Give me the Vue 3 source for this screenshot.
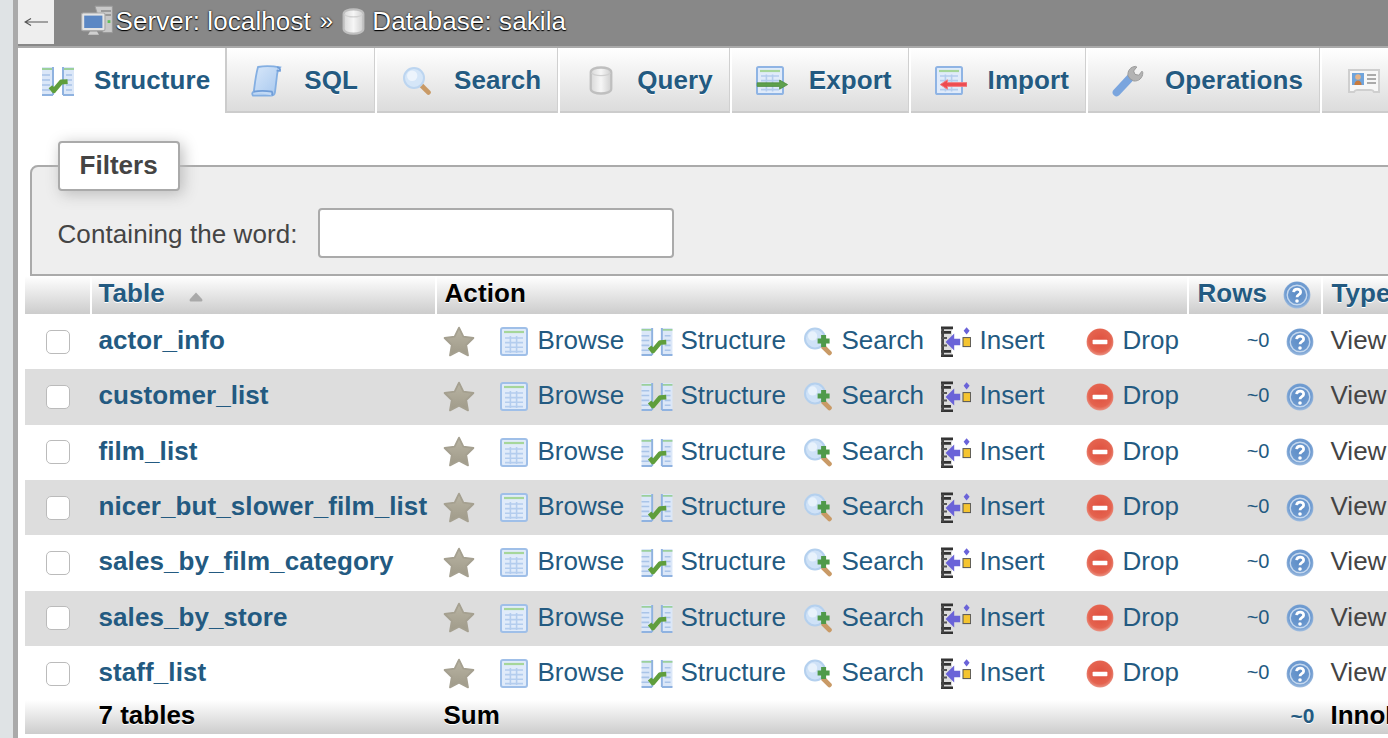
<script setup>
const tabs = [
  { label: 'Structure', icon: 'props', active: true },
  { label: 'SQL', icon: 'sql' },
  { label: 'Search', icon: 'lens' },
  { label: 'Query', icon: 'db' },
  { label: 'Export', icon: 'export' },
  { label: 'Import', icon: 'import' },
  { label: 'Operations', icon: 'wrench' },
  { label: '', icon: 'card' },
]
const names = ['actor_info', 'customer_list', 'film_list', 'nicer_but_slower_film_list', 'sales_by_film_category', 'sales_by_store', 'staff_list']
const actions = [
  { label: 'Browse', icon: 'browse' },
  { label: 'Structure', icon: 'props' },
  { label: 'Search', icon: 'lensplus' },
  { label: 'Insert', icon: 'insert' },
  { label: 'Drop', icon: 'drop' },
]
</script>

<template>
  <svg class="defs" width="0" height="0" aria-hidden="true">
    <defs>
      <linearGradient id="g-star" x1="0" y1="0" x2="0" y2="1"><stop offset="0" stop-color="#b9b4a3"/><stop offset="1" stop-color="#9f9a89"/></linearGradient>
      <linearGradient id="g-cyl" x1="0" y1="0" x2="1" y2="0"><stop offset="0" stop-color="#d8d8d8"/><stop offset=".5" stop-color="#f6f6f6"/><stop offset="1" stop-color="#cfcfcf"/></linearGradient>
      <radialGradient id="g-help" cx=".5" cy=".45" r=".6"><stop offset="0" stop-color="#5c8cc6"/><stop offset=".7" stop-color="#6f9bd0"/><stop offset="1" stop-color="#b4cbe6"/></radialGradient>
      <radialGradient id="g-drop" cx=".5" cy=".45" r=".6"><stop offset="0" stop-color="#e0503f"/><stop offset=".7" stop-color="#e4634f"/><stop offset="1" stop-color="#eda598"/></radialGradient>
      <linearGradient id="g-paper" x1="0" y1="0" x2="1" y2="1"><stop offset="0" stop-color="#d9e8fa"/><stop offset="1" stop-color="#a6c7ee"/></linearGradient>

      <symbol id="i-props" viewBox="0 0 16 15">
        <path d="M0 .5h5.500v14H0z" fill="#dbe7f8"/><path d="M10.500 .5H16v14h-5.500z" fill="#dbe7f8"/>
        <path d="M0 1.500h5.500M10.500 1.500H16" stroke="#9bd09b" stroke-width="1"/>
        <path d="M0 4.500h4M0 7h4M0 9.500h4M12 4.500h3M12 7h3M12 9.500h3M0 12h4M12 12h3" stroke="#a9c4e8" stroke-width=".8"/>
        <path d="M5.500 .5v14M0 14.500h5.500M10.500 .5v14M10.500 14.500H16" stroke="#8fb2e0" stroke-width="1" fill="none"/>
        <path d="M4.200 10.400l1.700 2 3.700-4.400 3.200-.2" stroke="#5f9e3c" stroke-width="2.400" fill="none" stroke-linejoin="round"/>
      </symbol>

      <symbol id="i-browse" viewBox="0 0 14 14.500">
        <rect x=".5" y=".5" width="13" height="13.500" rx="1" fill="#e0ebfa" stroke="#9fbfe8"/>
        <path d="M2 2.500h10" stroke="#a6d69a" stroke-width="1.100"/>
        <path d="M2.500 5.500h9M2.500 7.800h9M2.500 10.100h9M2.500 12.300h9M5.200 4.500v8.500M8.300 4.500v8.500" stroke="#b4cdee" stroke-width=".8"/>
      </symbol>

      <symbol id="i-sql" viewBox="0 0 16 16">
        <path d="M3.500 1c3-.6 7-.6 11 .2-1 1-1.300 2-1.500 4l-1 8.300c-.2 1.200-1 1.800-2 1.800H1c-.6-.8-.5-1.500 .4-2 .5-4 1-8.500 2.100-12.300z" fill="url(#g-paper)" stroke="#84afe2" stroke-width=".9"/>
        <path d="M13 1.200c1 0 1.800 .7 1.500 1.700-.7 0-1.300 0-1.700-.2M1.400 13.300c2.500-.5 6-.5 9 0 .4 .6 .3 1.300 .1 2" fill="#c3daf5" stroke="#6f9dd8" stroke-width=".9"/>
      </symbol>

      <symbol id="i-lens" viewBox="0 0 14 14">
        <path d="M9 9l3.700 3.700" stroke="#c99a66" stroke-width="2.400" stroke-linecap="round"/>
        <circle cx="5.500" cy="5.500" r="5" fill="#d5e6f8" stroke="#bcd5f0" stroke-width="1"/>
        <circle cx="4.600" cy="4.400" r="2.600" fill="#edf4fc"/>
      </symbol>

      <symbol id="i-lensplus" viewBox="0 0 14 14">
        <path d="M9 9l3.700 3.700" stroke="#c99a66" stroke-width="2.400" stroke-linecap="round"/>
        <circle cx="5.500" cy="5.500" r="5" fill="#cfe2f7" stroke="#b4d0ee" stroke-width="1"/>
        <circle cx="4.300" cy="4.200" r="2.300" fill="#e8f2fc"/>
        <path d="M9.800 3.800v6M6.800 6.800h6" stroke="#4f9a4a" stroke-width="2.500"/>
      </symbol>

      <symbol id="i-db" viewBox="0 0 14 16" preserveAspectRatio="none">
        <path d="M1 3.500c0-3.600 12-3.600 12 0v9c0 3.600-12 3.600-12 0z" fill="url(#g-cyl)" stroke="#bfbfbf" stroke-width="1.300"/>
        <path d="M1.500 3.800c1.500 2 9.500 2 11 0" fill="none" stroke="#d0d0d0" stroke-width=".8"/>
      </symbol>

      <symbol id="i-export" viewBox="0 0 16 15">
        <rect x=".5" y=".5" width="13" height="13.500" rx=".8" fill="#e0ebfa" stroke="#8fb4e4"/>
        <path d="M2 2.500h10" stroke="#a6d69a" stroke-width="1.100"/>
        <path d="M2.500 5h9M2.500 7.300h9M2.500 11.800h9M5.200 4.200v8.500M8.300 4.200v8.500" stroke="#b4cdee" stroke-width=".8"/>
        <path d="M.6 8.400h11.200V7l4 2.300-4 2.300v-1.400H.6z" fill="#5da04c" stroke="#4c8a3e" stroke-width=".4"/>
      </symbol>

      <symbol id="i-import" viewBox="0 0 16 15">
        <rect x=".5" y=".5" width="13" height="13.500" rx=".8" fill="#e0ebfa" stroke="#8fb4e4"/>
        <path d="M2 2.500h10" stroke="#a6d69a" stroke-width="1.100"/>
        <path d="M2.500 5h9M2.500 7.300h9M2.500 11.800h9M5.200 4.200v8.500M8.300 4.200v8.500" stroke="#b4cdee" stroke-width=".8"/>
        <path d="M16 8.300H6.200V6.900L2.600 9.300l3.600 2.300v-1.400H16z" fill="#ee4a50" stroke="#f08085" stroke-width=".5"/>
      </symbol>

      <symbol id="i-wrench" viewBox="0 0 16 16">
        <path d="M2.300 13.700L9 6.500" stroke="#7aa5de" stroke-width="3.900" stroke-linecap="round"/>
        <path d="M9 6.900l-1-1.600c-.3-2.500 1.300-4.500 3.800-4.600l.6.3-1.600 2 .7 1.700 1.900.4 1.600-2 .4.700c0 2.700-2 4.400-4.500 4.200z" fill="#b3b3b3" stroke="#999" stroke-width=".5"/>
      </symbol>

      <symbol id="i-card" viewBox="0 0 16 12">
        <path d="M.5 .5h15v11H13c-.5-1-1.200-1-1.500-1h-7c-.5 0-1 0-1.500 1H.5z" fill="#f7f7f7" stroke="#cfcfcf"/>
        <rect x="2" y="2" width="6" height="6" fill="#6fa4dc"/>
        <circle cx="5" cy="4" r="1.400" fill="#e6b488"/>
        <path d="M3.200 8c0-3 3.600-3 3.600 0z" fill="#c97a3c"/>
        <path d="M9.500 3h4.500M9.500 5h4.500M9.500 7h4.500" stroke="#aaa" stroke-width="1"/>
      </symbol>

      <symbol id="i-server" viewBox="0 0 16 16">
        <path d="M7 .6h8.700v13.200H11z" fill="#c8c8c8" stroke="#9a9a9a" stroke-width=".5"/>
        <path d="M10 3h5M10 5h5" stroke="#8a8a8a" stroke-width=".8"/>
        <rect x="13.300" y="7.600" width="1.400" height="1.400" fill="#5fc05a"/>
        <rect x=".3" y="4" width="11.700" height="8.800" rx=".8" fill="#e4e4e4" stroke="#aaa" stroke-width=".6"/>
        <rect x="1.600" y="5.300" width="9.100" height="6.200" fill="#5b87c4"/>
        <path d="M4.500 13.200h3.500l1 1.700H3.500z" fill="#cfcfcf"/>
      </symbol>

      <symbol id="i-star" viewBox="0 0 16 16">
        <path d="M8 .8l2.200 4.500 5 .7-3.600 3.500.9 5.200L8 12.300 3.500 14.700l.9-5.200L.8 6l5-.7z" fill="url(#g-star)" stroke="#a5a090" stroke-width=".9" stroke-linejoin="round"/>
      </symbol>

      <symbol id="i-insert" viewBox="0 0 15 15.500">
        <path d="M.5 .5h5v14.500h-5z" fill="#ddd"/>
        <path d="M0 .9h6M0 15h6M0 3.200h5M0 12.700h5" stroke="#333" stroke-width="1.400"/>
        <path d="M.8 1v14" stroke="#444" stroke-width="1.400"/>
        <path d="M0 6h3M0 9.800h3" stroke="#555" stroke-width="1"/>
        <path d="M2.300 8l4.300-4.200v2.600h3v3.200h-3v2.600z" fill="#6a63d8"/>
        <rect x="11" y="5.800" width="3.800" height="4.500" fill="#f4c430" stroke="#555" stroke-width=".5"/>
        <path d="M12.800 .6l1.500 1.800-1.500 1.800-1.500-1.800z" fill="#6a63d8"/>
      </symbol>

      <symbol id="i-drop" viewBox="0 0 14 14">
        <circle cx="7" cy="7" r="6.700" fill="url(#g-drop)"/>
        <rect x="3.300" y="5.900" width="7.400" height="2.200" rx=".4" fill="#fff"/>
      </symbol>

      <symbol id="i-help" viewBox="0 0 14 14">
        <circle cx="7" cy="7" r="6.700" fill="url(#g-help)"/>
        <circle cx="7" cy="7" r="4.900" fill="none" stroke="#c5d8ee" stroke-width=".7"/>
        <path d="M5.300 5.600c.2-2.100 3.600-2.100 3.500 0 0 1.300-1.800 1.200-1.800 2.500" fill="none" stroke="#fff" stroke-width="1.400"/>
        <circle cx="7" cy="10" r=".9" fill="#fff"/>
      </symbol>
    </defs>
  </svg>

  <div class="page">
    <aside class="strip"></aside>
    <main class="main">
      <header class="topbar">
        <button class="back" aria-label="Back">
          <svg class="arrow" viewBox="0 0 24 10"><path d="M24 5H1M7 1.500L1 5l6 3.500" fill="none" stroke="#555" stroke-width="1.200"/></svg>
        </button>
        <div class="crumbs">
          <svg class="ic crumb-server"><use href="#i-server"/></svg>
          <span>Server: localhost</span>
          <span class="sep">»</span>
          <svg class="ic crumb-db"><use href="#i-db"/></svg>
          <span>Database: sakila</span>
        </div>
      </header>

      <nav class="tabs">
        <a v-for="t in tabs" :key="t.icon" class="tab" :class="['tab-' + t.icon, { active: t.active }]">
          <svg class="ic tab-ic"><use :href="'#i-' + t.icon"/></svg>
          <span v-if="t.label">{{ t.label }}</span>
        </a>
      </nav>

      <fieldset class="filters">
        <legend>Filters</legend>
        <label class="filter-row">
          <span class="word-label">Containing the word:</span>
          <input type="text" class="word" />
        </label>
      </fieldset>

      <section class="tbl">
        <div class="row head">
          <div class="cell"></div>
          <div class="cell sep-l name-h"><span class="lift">Table</span><svg class="sort" viewBox="0 0 14 10"><path d="M7 .5L13 7c.8 1 .5 2.500-.8 2.500H1.800C.5 9.500 .2 8 1 7z" fill="#a9a9a9"/></svg></div>
          <div class="cell sep-l action-h"><span class="lift">Action</span></div>
          <div class="cell sep-l rows-h"><span class="lift">Rows</span><svg class="ic hlp"><use href="#i-help"/></svg></div>
          <div class="cell sep-l type-h"><span class="lift">Type</span></div>
        </div>

        <div v-for="n in names" :key="n" class="row body">
          <div class="cell chk"><input type="checkbox" class="box" /></div>
          <div class="cell name"><span class="up">{{ n }}</span></div>
          <div class="cell acts">
            <svg class="ic star"><use href="#i-star"/></svg>
            <a v-for="a in actions" :key="a.label" class="act" :class="'act-' + a.icon">
              <svg class="ic"><use :href="'#i-' + a.icon"/></svg>
              <span class="up">{{ a.label }}</span>
            </a>
          </div>
          <div class="cell count"><span class="approx up">~0</span><svg class="ic hlp"><use href="#i-help"/></svg></div>
          <div class="cell type"><span class="up">View</span></div>
        </div>

        <div class="row foot">
          <div class="cell"></div>
          <div class="cell name-f"><span class="up">7 tables</span></div>
          <div class="cell sum"><span class="up">Sum</span></div>
          <div class="cell total"><span class="up">~0</span></div>
          <div class="cell engine"><span class="up">InnoDB</span></div>
        </div>
      </section>
    </main>
  </div>
</template>

<style>
html, body { margin: 0; background: #fff; overflow: hidden; }
</style>

<style scoped>
.defs { position: absolute; }
.page {
  display: flex;
  height: 738px;
  overflow: hidden;
  font-family: "Liberation Sans", Arial, sans-serif;
  font-size: 26px;
  color: #444;
}
.strip {
  flex: none;
  width: 12.5px;
  background: #dfe3e5;
  border-right: 5.5px solid #aaa;
}
.main { flex: 1; min-width: 0; overflow: hidden; }
.ic { display: block; flex: none; filter: blur(.5px); }

.topbar {
  display: flex;
  align-items: flex-start;
  height: 46px;
  background: #888;
  border-bottom: 2px solid #aaa;
}
.back {
  display: flex;
  align-items: center;
  justify-content: center;
  width: 36px;
  height: 44px;
  padding: 0;
  border: 0;
  background: #eee;
}
.arrow { display: block; width: 24px; height: 10px; }
.crumbs {
  display: flex;
  align-items: center;
  height: 42px;
  margin-left: 27px;
  color: #fff;
  letter-spacing: .1px;
  text-shadow: 0 0 2px #000, 0 1px 1px #000;
  white-space: nowrap;
}
.crumb-server { width: 32px; height: 32px; margin-right: 3px; }
.crumb-db { width: 23px; height: 27px; margin-right: 7px; }
.sep { margin: 0 9px; font-size: 24px; }

.tabs {
  display: flex;
  height: 65px;
}
.tab {
  flex: none;
  display: flex;
  align-items: center;
  gap: 21px;
  padding: 2px 16px 0 24px;
  margin-right: 2px;
  box-sizing: border-box;
  font-weight: bold;
  letter-spacing: .08px;
  color: #235a81;
  background: linear-gradient(#fff, #dcdcdc);
  border-bottom: 2px solid #ccc;
  border-right: 1px solid #d0d0d0;
  text-shadow: 0 1px 0 #fff;
  white-space: nowrap;
}
.tab.active {
  background: #fff;
  gap: 20.5px;
  padding: 0 15px 0 24px;
  border-bottom: 0;
  border-right: 2px solid #ccc;
  margin-right: 0;
}
.tab-ic { width: 32px; height: 32px; }
.tab-lens .tab-ic { width: 28px; height: 28px; margin: 0 2px 0 2px; }
.tab-db .tab-ic { width: 24px; height: 29px; margin: 0 3px 0 5px; }
.tab-card .tab-ic { margin-left: 2px; }

.filters {
  margin: 28px -30px 0 12px;
  padding: 17px 26px 16px;
  min-width: 0;
  background: #eee;
  border: 2px solid #aaa;
  border-radius: 8px 0 0 0;
}
.filters legend {
  padding: 0 20px 2px;
  height: 44px;
  line-height: 44px;
  font-weight: bold;
  letter-spacing: .03px;
  background: #fff;
  border: 2px solid #aaa;
  border-radius: 4px;
  box-shadow: 3px 3px 15px #bbb;
  color: #444;
}
.filter-row {
  display: flex;
  align-items: center;
  gap: 20px;
  letter-spacing: .08px;
}
.word-label { margin-top: 2px; }
.word {
  width: 356px;
  height: 50px;
  box-sizing: border-box;
  background: #fff;
  border: 2px solid #aaa;
  border-radius: 4px;
  font: inherit;
  margin: 0;
}

.tbl { margin-left: 7px; }
.row {
  display: grid;
  grid-template-columns: 65px 345px 752px 134px 200px;
  width: 1496px;
  align-items: stretch;
}
.cell {
  display: flex;
  align-items: center;
  min-width: 0;
  white-space: nowrap;
}
.lift { margin-top: -3px; }
.up { margin-top: -2.600px; }

.head {
  height: 38px;
  font-weight: bold;
  letter-spacing: .08px;
  color: #235a81;
  text-shadow: 0 1px 0 #fff;
}
.head .cell { background: linear-gradient(#fff, #ccc); }
.head .sep-l { border-left: 2px solid #fff; }
.name-h { padding-left: 7px; }
.sort { width: 14px; height: 10px; margin: 4px 0 0 24px; }
.head .action-h { padding-left: 8px; color: #000; }
.rows-h { padding-left: 9px; }
.rows-h .hlp { margin-left: 16px; }
.type-h { padding-left: 9px; }
.hlp { width: 28px; height: 28px; }

.body { height: 55.33px; background: #fff; }
.body:nth-child(odd) { background: #ddd; }
.chk { justify-content: flex-start; padding-left: 21px; }
.box {
  appearance: none;
  -webkit-appearance: none;
  width: 24px;
  height: 24px;
  margin: 0;
  background: #fff;
  border: 1.5px solid #bbb;
  border-radius: 5px;
  box-sizing: border-box;
}
.name { padding-left: 9px; font-weight: bold; letter-spacing: .08px; color: #235a81; }
.acts {
  display: grid;
  grid-template-columns: 57px 141px 163px 137px 145px 1fr;
  padding-left: 8px;
  align-items: center;
}
.star { width: 32px; height: 32px; }
.act {
  display: flex;
  align-items: center;
  gap: 10px;
  color: #235a81;
}
.act .ic { width: 28px; height: 29px; }
.act-props { gap: 8px; }
.act-props .ic { width: 32px; }
.act-insert { gap: 9px; }
.act-insert .ic { width: 30px; height: 31px; }
.act-drop { gap: 9px; }
.act-drop .ic { height: 28px; }
.count {
  justify-content: flex-end;
  padding-right: 7px;
  gap: 16px;
  color: #235a81;
}
.approx { font-size: 20px; }
.type { padding-left: 10px; }

.foot {
  height: 34px;
  margin-top: -1px;
  font-weight: bold;
  color: #000;
  text-shadow: 0 1px 0 #fff;
  background: linear-gradient(#fff, #ccc);
}
.foot .up { margin-top: -3px; }
.name-f { padding-left: 9px; }
.sum { padding-left: 9px; }
.total { justify-content: flex-end; padding-right: 6px; color: #235a81; font-size: 21px; }
.engine { padding-left: 10px; }
</style>
